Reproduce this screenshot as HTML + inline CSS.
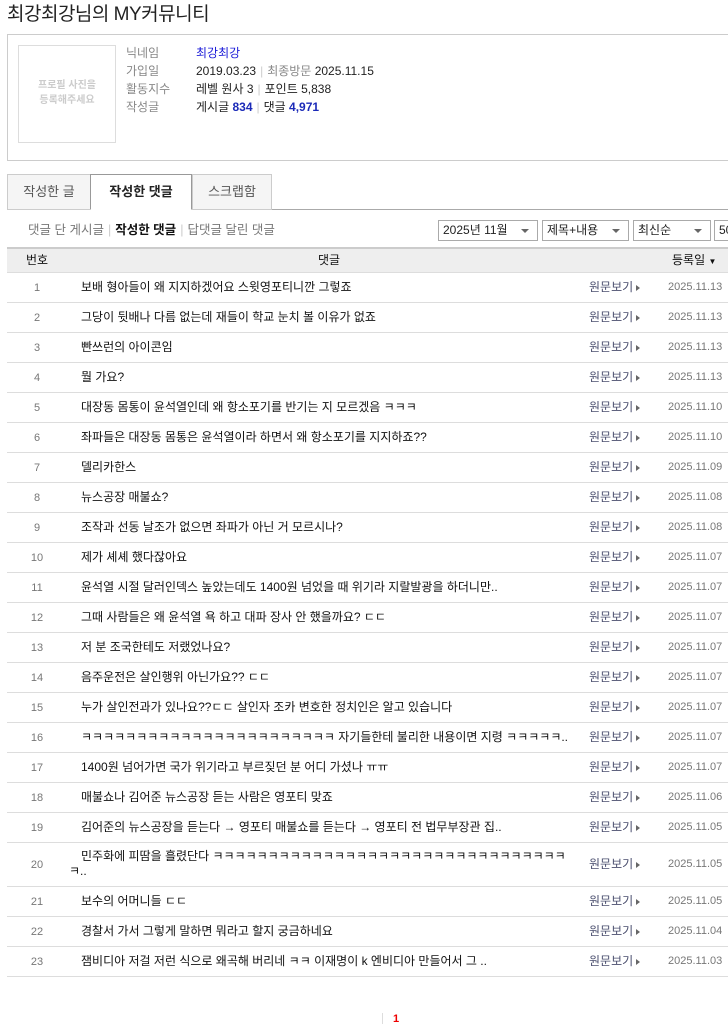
<!DOCTYPE html>
<html><head><meta charset="utf-8"><style>
*{margin:0;padding:0;box-sizing:border-box}
body{width:728px;height:1029px;overflow:hidden;background:#fff;font-family:"Liberation Sans","Noto Sans CJK KR",sans-serif;font-size:12px;color:#222;position:relative}
.a{position:absolute;white-space:nowrap;line-height:16px}
h1{position:absolute;left:7px;top:2px;font-size:19px;font-weight:normal;color:#222;letter-spacing:-0.5px;line-height:26px}
.box{position:absolute;left:7px;top:34px;width:740px;height:127px;border:1px solid #ccc}
.ph{position:absolute;left:18px;top:45px;width:98px;height:98px;border:1px solid #ddd;color:#ccc;font-size:10px;text-align:center;padding-top:32px;line-height:15px;font-weight:bold}
.lb{color:#888}
.sep{color:#ccc;margin:0 4px}
.blue{color:#1b2ab8;font-weight:bold}
.tab{position:absolute;top:174px;height:36px;border:1px solid #ccc;background:#f5f5f5;color:#555;font-size:13px;text-align:center;line-height:34px}
.sel{position:absolute;top:220px;height:21px;border:1px solid #aaa;font-size:12px;line-height:19px;padding-left:4px;background:#fff}
.sel:after{content:"";position:absolute;right:8px;top:8px;border:4px solid transparent;border-top:4px solid #666;border-bottom:0}
.hd{position:absolute;left:7px;top:247px;width:721px;height:26px;background:#eee;border-top:2px solid #ccc;border-bottom:1px solid #ddd}
.row{position:absolute;left:7px;width:721px;border-bottom:1px solid #ddd}
.row span{line-height:15px}
.row .n{position:absolute;left:0;width:60px;text-align:center;color:#777;font-size:11px}
.row .c{position:absolute;left:74px;width:510px;color:#111}
.row .v{position:absolute;left:582px;color:#4a4e6e}
.row .v:after{content:"";display:inline-block;margin-left:3px;border:3px solid transparent;border-left:4px solid #666;border-right:0;vertical-align:0}
.row .d{position:absolute;left:661px;color:#777;font-size:11px}
</style></head><body>
<h1>최강최강님의 MY커뮤니티</h1>
<div class="box"></div>
<div class="ph">프로필 사진을<br>등록해주세요</div>
<div class="a lb" style="left:126px;top:45px">닉네임</div><div class="a" style="left:196px;top:45px;color:#1a1ad8">최강최강</div>
<div class="a lb" style="left:126px;top:63px">가입일</div><div class="a" style="left:196px;top:63px">2019.03.23<span class="sep">|</span><span class="lb">최종방문</span> 2025.11.15</div>
<div class="a lb" style="left:126px;top:81px">활동지수</div><div class="a" style="left:196px;top:81px">레벨 원사 3<span class="sep">|</span>포인트 5,838</div>
<div class="a lb" style="left:126px;top:99px">작성글</div><div class="a" style="left:196px;top:99px">게시글 <span class="blue">834</span><span class="sep">|</span>댓글 <span class="blue">4,971</span></div>
<div class="a" style="left:7px;top:209px;width:721px;border-top:1px solid #aaa"></div>
<div class="tab" style="left:7px;width:84px">작성한 글</div>
<div class="tab" style="left:90px;width:102px;background:#fff;border-color:#999;border-bottom:1px solid #fff;color:#222;font-weight:bold">작성한 댓글</div>
<div class="tab" style="left:192px;width:80px">스크랩함</div>
<div class="a" style="left:28px;top:222px;color:#777;font-size:12.5px">댓글 단 게시글<span class="sep">|</span><b style="color:#111">작성한 댓글</b><span class="sep">|</span>답댓글 달린 댓글</div>
<div class="sel" style="left:438px;width:100px">2025년 11월</div>
<div class="sel" style="left:542px;width:87px">제목+내용</div>
<div class="sel" style="left:633px;width:78px">최신순</div>
<div class="sel" style="left:714px;width:40px">50</div>
<div class="hd"></div>
<div class="a" style="left:26px;top:252px;color:#111">번호</div>
<div class="a" style="left:318px;top:252px;color:#111">댓글</div>
<div class="a" style="left:672px;top:252px;color:#111">등록일 <span style="font-size:8px">▼</span></div>
<div class="row" style="top:273px;height:30px"><span class="n" style="top:8px">1</span><span class="c" style="top:7px">보배 형아들이 왜 지지하겠어요 스윗영포티니깐 그렇죠</span><span class="v" style="top:7px">원문보기</span><span class="d" style="top:7px">2025.11.13</span></div>
<div class="row" style="top:303px;height:30px"><span class="n" style="top:8px">2</span><span class="c" style="top:7px">그당이 뒷배나 다름 없는데 재들이 학교 눈치 볼 이유가 없죠</span><span class="v" style="top:7px">원문보기</span><span class="d" style="top:7px">2025.11.13</span></div>
<div class="row" style="top:333px;height:30px"><span class="n" style="top:8px">3</span><span class="c" style="top:7px">빤쓰런의 아이콘임</span><span class="v" style="top:7px">원문보기</span><span class="d" style="top:7px">2025.11.13</span></div>
<div class="row" style="top:363px;height:30px"><span class="n" style="top:8px">4</span><span class="c" style="top:7px">뭘 가요?</span><span class="v" style="top:7px">원문보기</span><span class="d" style="top:7px">2025.11.13</span></div>
<div class="row" style="top:393px;height:30px"><span class="n" style="top:8px">5</span><span class="c" style="top:7px">대장동 몸통이 윤석열인데 왜 항소포기를 반기는 지 모르겠음 ㅋㅋㅋ</span><span class="v" style="top:7px">원문보기</span><span class="d" style="top:7px">2025.11.10</span></div>
<div class="row" style="top:423px;height:30px"><span class="n" style="top:8px">6</span><span class="c" style="top:7px">좌파들은 대장동 몸통은 윤석열이라 하면서 왜 항소포기를 지지하죠??</span><span class="v" style="top:7px">원문보기</span><span class="d" style="top:7px">2025.11.10</span></div>
<div class="row" style="top:453px;height:30px"><span class="n" style="top:8px">7</span><span class="c" style="top:7px">델리카한스</span><span class="v" style="top:7px">원문보기</span><span class="d" style="top:7px">2025.11.09</span></div>
<div class="row" style="top:483px;height:30px"><span class="n" style="top:8px">8</span><span class="c" style="top:7px">뉴스공장 매불쇼?</span><span class="v" style="top:7px">원문보기</span><span class="d" style="top:7px">2025.11.08</span></div>
<div class="row" style="top:513px;height:30px"><span class="n" style="top:8px">9</span><span class="c" style="top:7px">조작과 선동 날조가 없으면 좌파가 아닌 거 모르시나?</span><span class="v" style="top:7px">원문보기</span><span class="d" style="top:7px">2025.11.08</span></div>
<div class="row" style="top:543px;height:30px"><span class="n" style="top:8px">10</span><span class="c" style="top:7px">제가 셰셰 했다잖아요</span><span class="v" style="top:7px">원문보기</span><span class="d" style="top:7px">2025.11.07</span></div>
<div class="row" style="top:573px;height:30px"><span class="n" style="top:8px">11</span><span class="c" style="top:7px">윤석열 시절 달러인덱스 높았는데도 1400원 넘었을 때 위기라 지랄발광을 하더니만..</span><span class="v" style="top:7px">원문보기</span><span class="d" style="top:7px">2025.11.07</span></div>
<div class="row" style="top:603px;height:30px"><span class="n" style="top:8px">12</span><span class="c" style="top:7px">그때 사람들은 왜 윤석열 욕 하고 대파 장사 안 했을까요? ㄷㄷ</span><span class="v" style="top:7px">원문보기</span><span class="d" style="top:7px">2025.11.07</span></div>
<div class="row" style="top:633px;height:30px"><span class="n" style="top:8px">13</span><span class="c" style="top:7px">저 분 조국한테도 저랬었나요?</span><span class="v" style="top:7px">원문보기</span><span class="d" style="top:7px">2025.11.07</span></div>
<div class="row" style="top:663px;height:30px"><span class="n" style="top:8px">14</span><span class="c" style="top:7px">음주운전은 살인행위 아닌가요?? ㄷㄷ</span><span class="v" style="top:7px">원문보기</span><span class="d" style="top:7px">2025.11.07</span></div>
<div class="row" style="top:693px;height:30px"><span class="n" style="top:8px">15</span><span class="c" style="top:7px">누가 살인전과가 있나요??ㄷㄷ 살인자 조카 변호한 정치인은 알고 있습니다</span><span class="v" style="top:7px">원문보기</span><span class="d" style="top:7px">2025.11.07</span></div>
<div class="row" style="top:723px;height:30px"><span class="n" style="top:8px">16</span><span class="c" style="top:7px">ㅋㅋㅋㅋㅋㅋㅋㅋㅋㅋㅋㅋㅋㅋㅋㅋㅋㅋㅋㅋㅋㅋㅋ 자기들한테 불리한 내용이면 지령 ㅋㅋㅋㅋㅋ..</span><span class="v" style="top:7px">원문보기</span><span class="d" style="top:7px">2025.11.07</span></div>
<div class="row" style="top:753px;height:30px"><span class="n" style="top:8px">17</span><span class="c" style="top:7px">1400원 넘어가면 국가 위기라고 부르짖던 분 어디 가셨나 ㅠㅠ</span><span class="v" style="top:7px">원문보기</span><span class="d" style="top:7px">2025.11.07</span></div>
<div class="row" style="top:783px;height:30px"><span class="n" style="top:8px">18</span><span class="c" style="top:7px">매불쇼나 김어준 뉴스공장 듣는 사람은 영포티 맞죠</span><span class="v" style="top:7px">원문보기</span><span class="d" style="top:7px">2025.11.06</span></div>
<div class="row" style="top:813px;height:30px"><span class="n" style="top:8px">19</span><span class="c" style="top:7px">김어준의 뉴스공장을 듣는다 → 영포티 매불쇼를 듣는다 → 영포티 전 법무부장관 집..</span><span class="v" style="top:7px">원문보기</span><span class="d" style="top:7px">2025.11.05</span></div>
<div class="row" style="top:843px;height:44px"><span class="n" style="top:15px">20</span><span class="c" style="top:6px;white-space:normal">민주화에 피땀을 흘렸단다 ㅋㅋㅋㅋㅋㅋㅋㅋㅋㅋㅋㅋㅋㅋㅋㅋㅋㅋㅋㅋㅋㅋㅋㅋㅋㅋㅋㅋㅋㅋㅋㅋ<br><span style="margin-left:-12px">ㅋ..</span></span><span class="v" style="top:14px">원문보기</span><span class="d" style="top:14px">2025.11.05</span></div>
<div class="row" style="top:887px;height:30px"><span class="n" style="top:8px">21</span><span class="c" style="top:7px">보수의 어머니들 ㄷㄷ</span><span class="v" style="top:7px">원문보기</span><span class="d" style="top:7px">2025.11.05</span></div>
<div class="row" style="top:917px;height:30px"><span class="n" style="top:8px">22</span><span class="c" style="top:7px">경찰서 가서 그렇게 말하면 뭐라고 할지 궁금하네요</span><span class="v" style="top:7px">원문보기</span><span class="d" style="top:7px">2025.11.04</span></div>
<div class="row" style="top:947px;height:30px"><span class="n" style="top:8px">23</span><span class="c" style="top:7px">잼비디아 저걸 저런 식으로 왜곡해 버리네 ㅋㅋ 이재명이 k 엔비디아 만들어서 그 ..</span><span class="v" style="top:7px">원문보기</span><span class="d" style="top:7px">2025.11.03</span></div>
<div class="a" style="left:382px;top:1013px;height:11px;border-left:1px solid #ddd"></div>
<div class="a" style="left:393px;top:1011px;color:#e00;font-weight:bold;font-size:11px">1</div>
</body></html>
